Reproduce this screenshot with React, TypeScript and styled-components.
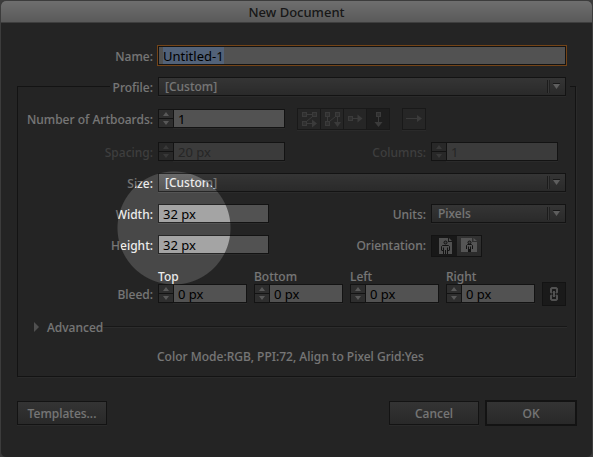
import React, { useEffect, useRef } from "react";
import styled, { createGlobalStyle, css } from "styled-components";

const edge = "#262626";
const bevel = "#545454";

const GlobalStyle = createGlobalStyle`
  *, *::before, *::after { box-sizing: border-box; }
  body {
    margin: 0;
    background: #787878;
    color: #ececec;
    font: 500 12px/16px "Noto Sans", "Open Sans", sans-serif;
  }
  input, select, button { font: inherit; color: inherit; margin: 0; }
`;

const Dialog = styled.form`
  background: #484848;
  border: 1px solid #787878;
  border-radius: 6px;
  overflow: hidden;
`;

const TitleBar = styled.h1`
  margin: 0;
  height: 22px;
  padding-top: 2px;
  text-align: center;
  font-size: 13px;
  font-weight: 500;
  line-height: 18px;
  color: #303030;
  background: linear-gradient(#dedede, #b4b4b4);
  border-bottom: 1px solid #7c7c7c;
`;

const Body = styled.div`
  padding: 23px 16px 32px;
`;

const Row = styled.div<{ $raised?: boolean }>`
  display: flex;
  align-items: flex-start;
  gap: 5px;
  padding-right: 9px;
  padding-top: ${(p) => (p.$raised ? "1px" : "0")};
`;

const NameRow = styled(Row)`
  padding: 0 10px 0 1px;
`;

const Label = styled.label<{ $dim?: boolean }>`
  flex: none;
  width: 135px;
  line-height: 22px;
  height: 19px;
  text-align: right;
  white-space: nowrap;
  color: ${(p) => (p.$dim ? "#7c7c7c" : "inherit")};
`;

const SideLabel = styled(Label)`
  width: auto;
  margin-left: auto;
`;

const SideControl = styled.div`
  flex: none;
  display: flex;
  width: 135px;
`;

const field = css`
  height: 19px;
  min-width: 0;
  padding: 1px 4px 0;
  border: 1px solid ${edge};
  border-radius: 0;
  background: #a4a4a4;
  color: #000;
  font-size: 13px;
  font-weight: 400;
  line-height: 16px;
  outline: none;
  box-shadow: 0 1px 0 ${bevel};
  &:disabled { background: #767676; color: #4c4c4c; }
`;

const TextField = styled.input`
  ${field}
  width: 111px;
`;

const NameField = styled.input`
  ${field}
  flex: 1;
  box-shadow: 0 0 0 1px #e8892e;
  &::selection { background: #a5c4f2; color: #000; }
`;

const Stepper = styled.div<{ $width: number }>`
  display: grid;
  grid-template-columns: 15px 1fr;
  grid-template-rows: 10px 9px;
  width: ${(p) => p.$width}px;
  height: 19px;
`;

const StepInput = styled.input`
  ${field}
  grid-area: 1 / 2 / 3 / 3;
  width: 100%;
`;

const StepButton = styled.button<{ $down?: boolean }>`
  grid-column: 1;
  display: grid;
  place-items: center;
  padding: 0;
  border: 1px solid ${edge};
  border-right: 0;
  border-top-width: ${(p) => (p.$down ? "0" : "1px")};
  background: #5c5c5c;
  color: #b0b0b0;
  &:disabled { background: #505050; color: #727272; }
`;

const SelectBox = styled.div`
  flex: 1;
  min-width: 0;
  display: grid;
  grid-template-columns: 1fr 20px;
  align-items: center;
  height: 19px;
  border: 1px solid ${edge};
  background: linear-gradient(#6a6a6a, #545454);
  box-shadow: 0 1px 0 ${bevel};
`;

const SelectInput = styled.select`
  grid-area: 1 / 1 / 2 / 3;
  width: 100%;
  height: 17px;
  appearance: none;
  border: 0;
  padding: 0 22px 0 6px;
  background: transparent;
  outline: none;
`;

const SelectArrow = styled.svg`
  grid-area: 1 / 2 / 2 / 3;
  pointer-events: none;
`;

const Group = styled.fieldset`
  margin: 12px 0 0;
  padding: 0 0 10px;
  min-width: 0;
  border: 1px solid ${edge};
  box-shadow: 1px 1px 0 ${bevel};
`;

const Legend = styled.legend`
  width: calc(100% - 97px);
  margin-left: 92px;
  padding: 0 4px 0 0;
`;

const LegendRow = styled.div`
  display: flex;
  gap: 5px;
`;

const LegendLabel = styled(Label)`
  width: 43px;
`;

const Rows = styled.div`
  display: flex;
  flex-direction: column;
  gap: 12px;
  padding-top: 12px;
`;

const ButtonStrip = styled.div`
  display: flex;
  height: 22px;
  margin: -1px 0 0 7px;
  border: 1px solid #323232;
  box-shadow: 0 1px 0 ${bevel};
`;

const IconButton = styled.button<{ $on?: boolean }>`
  display: grid;
  place-items: center;
  width: 23px;
  padding: 0;
  border: 0;
  border-right: 1px solid #323232;
  background: ${(p) => (p.$on ? "#3c3c3c" : "#4c4c4c")};
  color: #767676;
  &:last-child { border-right: 0; width: 22px; }
`;

const OrientationStrip = styled.div`
  display: flex;
  height: 22px;
  border: 1px solid ${edge};
`;

const OrientationButton = styled.button<{ $on?: boolean }>`
  display: grid;
  place-items: center;
  width: ${(p) => (p.$on ? "25px" : "24px")};
  padding: 0;
  border: 0;
  background: ${(p) => (p.$on ? "#303030" : "linear-gradient(#646464, #545454)")};
  color: ${(p) => (p.$on ? "#a0a0a0" : "#aaa")};
`;

const BleedRow = styled(Row)`
  align-items: flex-end;
`;

const BleedLabel = styled(Label)`
  margin-bottom: 3px;
`;

const BleedFields = styled.div`
  display: flex;
  gap: 7px;
  margin-bottom: 3px;
`;

const BleedField = styled.div`
  display: flex;
  flex-direction: column;
`;

const BleedCaption = styled.label`
  height: 15px;
  line-height: 16px;
`;

const LinkButton = styled.button`
  display: grid;
  place-items: center;
  width: 24px;
  height: 24px;
  margin-left: auto;
  padding: 0;
  border: 1px solid ${edge};
  background: #343434;
  color: #a2a2a2;
`;

const AdvancedRow = styled.div`
  display: flex;
  align-items: center;
  height: 18px;
  padding: 0 8px 0 16px;
`;

const Disclosure = styled.button`
  display: flex;
  align-items: center;
  gap: 7px;
  padding: 0;
  border: 0;
  background: none;
  line-height: 18px;
`;

const DisclosureText = styled.span`
  padding-top: 2px;
`;

const Rule = styled.hr`
  flex: 1;
  height: 2px;
  margin: 0;
  border: 0;
  border-top: 1px solid #2e2e2e;
  border-bottom: 1px solid #585858;
`;

const Summary = styled.p`
  margin: 0;
  padding-left: 139px;
  line-height: 18px;
`;

const Footer = styled.div`
  display: flex;
  gap: 7px;
  margin-top: 24px;
`;

const PushButton = styled.button<{ $primary?: boolean }>`
  width: 90px;
  height: 24px;
  padding: 1px 0 0;
  border: 1px solid ${edge};
  background: linear-gradient(#686868, #525252);
  box-shadow: ${(p) => (p.$primary ? `0 0 0 1px ${edge}` : `0 1px 0 ${bevel}`)};
  &:first-child { margin-right: auto; }
`;

const Spotlight = styled.div`
  position: fixed;
  inset: 0;
  pointer-events: none;
  background: radial-gradient(circle at 174px 228px, transparent 56px, rgba(0, 0, 0, 0.5) 57px);
`;

interface StepperFieldProps {
  id: string;
  value: string;
  width: number;
  disabled?: boolean;
}

function StepperField({ id, value, width, disabled }: StepperFieldProps) {
  return (
    <Stepper $width={width}>
      <StepButton type="button" aria-label="Increase" disabled={disabled}>
        <svg width="6" height="4" viewBox="0 0 6 4"><path d="M0 4L3 0L6 4z" fill="currentColor" /></svg>
      </StepButton>
      <StepButton type="button" aria-label="Decrease" disabled={disabled} $down>
        <svg width="6" height="4" viewBox="0 0 6 4"><path d="M0 0L3 4L6 0z" fill="currentColor" /></svg>
      </StepButton>
      <StepInput id={id} defaultValue={value} disabled={disabled} />
    </Stepper>
  );
}

function Dropdown({ id, value }: { id: string; value: string }) {
  return (
    <SelectBox>
      <SelectInput id={id} defaultValue={value}>
        <option>{value}</option>
      </SelectInput>
      <SelectArrow width="20" height="17" viewBox="0 0 20 17">
        <path d="M3.500 2v13" stroke="#6e6e6e" />
        <path d="M2.500 2v13" stroke="#363636" />
        <path d="M4.500 2v13" stroke="#444" />
        <path d="M8 5.500h7" stroke="#303030" />
        <path d="M8 6h7l-3.500 5z" fill="#bcbcbc" />
      </SelectArrow>
    </SelectBox>
  );
}

const flowIcons = [
  {
    name: "Grid by row",
    boxes: [[1, 1], [11, 1], [1, 10]],
    lines: "M6 3.500h5M11 6L6 10M6 12.500h5",
    head: "M11 8.500l5 4l-5 4z",
  },
  {
    name: "Grid by column",
    boxes: [[1, 1], [11, 1], [1, 10]],
    lines: "M3.500 6v4M11 6L6 10M13.500 6v6",
    head: "M10 11h7l-3.500 5z",
  },
  {
    name: "Arrange by row",
    boxes: [[1, 5]],
    lines: "M6 7.500h5",
    head: "M10.500 3.500l5 4l-5 4z",
  },
  {
    name: "Arrange by column",
    boxes: [[6, 1]],
    lines: "M8.500 6v6",
    head: "M4.500 11h8l-4 5z",
  },
];

function Page({ landscape }: { landscape?: boolean }) {
  return (
    <svg width="18" height="18" viewBox="0 0 18 18" fill="none">
      {landscape ? (
        <path d="M1 1h11v4h5v10h-16z" fill="currentColor" />
      ) : (
        <path d="M3 1h9v4h4v12h-13z" fill="currentColor" />
      )}
      <path d={landscape ? "M13.500 1v3h3.500z" : "M13 1v3h3z"} fill="currentColor" />
      <circle cx="9.500" cy="5.500" r="1.500" fill="#888" stroke="#242424" />
      <path
        d={
          landscape
            ? "M6.500 12V8.500L7.500 7.500H11.500L12.500 8.500V12M8.500 9.500V15M10.500 9.500V15M9.500 12V15"
            : "M5.500 13V9.500L6.500 8.500H12.500L13.500 9.500V13M7.500 10.500V17M11.500 10.500V17M9.500 13V17M7.500 13.500H5.500M13.500 13.500H11.500"
        }
        stroke="#242424"
      />
    </svg>
  );
}

const bleedSides = ["Top", "Bottom", "Left", "Right"];

export default function App() {
  const nameRef = useRef<HTMLInputElement>(null);

  useEffect(() => {
    nameRef.current?.focus();
    nameRef.current?.select();
  }, []);

  return (
    <>
      <GlobalStyle />
      <Dialog onSubmit={(e) => e.preventDefault()}>
        <TitleBar>New Document</TitleBar>
        <Body>
          <NameRow>
            <Label htmlFor="name">Name:</Label>
            <NameField id="name" ref={nameRef} defaultValue="Untitled-1" />
          </NameRow>
          <Group>
            <Legend>
              <LegendRow>
                <LegendLabel htmlFor="profile">Profile:</LegendLabel>
                <Dropdown id="profile" value="[Custom]" />
              </LegendRow>
            </Legend>
            <Rows>
              <Row $raised>
                <Label htmlFor="artboards">Number of Artboards:</Label>
                <StepperField id="artboards" value="1" width={127} />
                <ButtonStrip>
                  {flowIcons.map((icon, i) => (
                    <IconButton key={icon.name} type="button" aria-label={icon.name} $on={i === 3}>
                      <svg width="18" height="18" viewBox="-1 -1 18 18">
                        {icon.boxes.map(([x, y]) => (
                          <rect key={`${x}-${y}`} x={x + 0.5} y={y + 0.5} width="4" height="4" fill="#606060" stroke="currentColor" />
                        ))}
                        <path d={icon.lines} stroke="currentColor" fill="none" />
                        <path d={icon.head} fill="currentColor" />
                      </svg>
                    </IconButton>
                  ))}
                </ButtonStrip>
                <ButtonStrip>
                  <IconButton type="button" aria-label="Left to right layout">
                    <svg width="18" height="18" viewBox="0 0 18 18">
                      <path d="M1 8.500h12" stroke="currentColor" />
                      <path d="M12 5l5 3.500l-5 3.500z" fill="currentColor" />
                    </svg>
                  </IconButton>
                </ButtonStrip>
              </Row>
              <Row>
                <Label htmlFor="spacing" $dim>Spacing:</Label>
                <StepperField id="spacing" value="20 px" width={127} disabled />
                <SideLabel htmlFor="columns" $dim>Columns:</SideLabel>
                <SideControl>
                  <StepperField id="columns" value="1" width={127} disabled />
                </SideControl>
              </Row>
              <Row>
                <Label htmlFor="size">Size:</Label>
                <Dropdown id="size" value="[Custom]" />
              </Row>
              <Row>
                <Label htmlFor="width">Width:</Label>
                <TextField id="width" defaultValue="32 px" />
                <SideLabel htmlFor="units">Units:</SideLabel>
                <SideControl>
                  <Dropdown id="units" value="Pixels" />
                </SideControl>
              </Row>
              <Row>
                <Label htmlFor="height">Height:</Label>
                <TextField id="height" defaultValue="32 px" />
                <SideLabel as="span" id="orientation">Orientation:</SideLabel>
                <SideControl>
                  <OrientationStrip role="group" aria-labelledby="orientation">
                    <OrientationButton type="button" aria-label="Portrait" $on><Page /></OrientationButton>
                    <OrientationButton type="button" aria-label="Landscape"><Page landscape /></OrientationButton>
                  </OrientationStrip>
                </SideControl>
              </Row>
              <BleedRow>
                <BleedLabel as="span">Bleed:</BleedLabel>
                <BleedFields>
                  {bleedSides.map((side) => (
                    <BleedField key={side}>
                      <BleedCaption htmlFor={side}>{side}</BleedCaption>
                      <StepperField id={side} value="0 px" width={89} />
                    </BleedField>
                  ))}
                </BleedFields>
                <LinkButton type="button" aria-label="Link bleed values">
                  <svg width="10" height="16" viewBox="0 0 10 16" fill="none" stroke="currentColor" strokeWidth="2">
                    <path d="M3 7L2 6V3L3 2H7L8 3V6L7 7M3 9L2 10V13L3 14H7L8 13V10L7 9M5 5v6" />
                  </svg>
                </LinkButton>
              </BleedRow>
              <AdvancedRow>
                <Disclosure type="button" aria-expanded="false">
                  <svg width="6" height="10" viewBox="0 0 6 10"><path d="M0 0l5 5l-5 5z" fill="#a0a0a0" /></svg>
                  <DisclosureText>Advanced</DisclosureText>
                </Disclosure>
                <Rule />
              </AdvancedRow>
              <Summary>Color Mode:RGB, PPI:72, Align to Pixel Grid:Yes</Summary>
            </Rows>
          </Group>
          <Footer>
            <PushButton type="button">Templates...</PushButton>
            <PushButton type="button">Cancel</PushButton>
            <PushButton type="submit" $primary>OK</PushButton>
          </Footer>
        </Body>
      </Dialog>
      <Spotlight />
    </>
  );
}
